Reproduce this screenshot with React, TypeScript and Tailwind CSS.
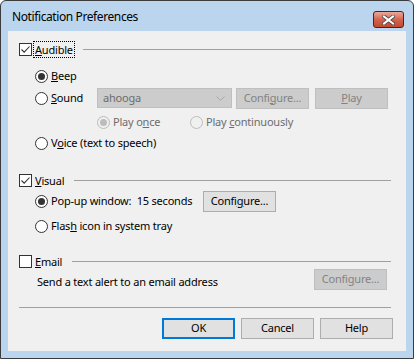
import type { ReactNode } from 'react'

const font = { fontFamily: '"Noto Sans", "Open Sans", sans-serif' }

function Check({ checked }: { checked?: boolean }) {
  return (
    <span className="w-[13px] h-[13px] shrink-0 border border-[#333333] bg-white flex items-center justify-center">
      {checked && (
        <svg width="11" height="11" viewBox="0 0 11 11">
          <path d="M1.5 5.5 L4.2 8.2 L9.5 2.5" fill="none" stroke="#333333" strokeWidth="1.1" />
        </svg>
      )}
    </span>
  )
}

function Radio({ checked, disabled }: { checked?: boolean; disabled?: boolean }) {
  return (
    <span
      className={`w-[13px] h-[13px] shrink-0 rounded-full border flex items-center justify-center ${
        disabled ? 'border-[#bcbcbc] bg-[#f0f0f0]' : 'border-[#333333] bg-white'
      }`}
    >
      {checked && (
        <span className={`w-[7px] h-[7px] rounded-full ${disabled ? 'bg-[#bcbcbc]' : 'bg-[#333333]'}`} />
      )}
    </span>
  )
}

function Btn({ children, disabled, primary }: { children: ReactNode; disabled?: boolean; primary?: boolean }) {
  let cls = 'border border-[#adadad] bg-[#e1e1e1] text-black'
  if (disabled) cls = 'border border-[#bfbfbf] bg-[#cccccc] text-[#838383]'
  if (primary) cls = 'border-2 border-[#0078d7] bg-[#e1e1e1] text-black'
  return (
    <div className={`w-[73px] h-[21px] shrink-0 flex items-center justify-center whitespace-nowrap ${cls}`}>
      {children}
    </div>
  )
}

function Group({ label, checked, focus }: { label: ReactNode; checked?: boolean; focus?: boolean }) {
  return (
    <div className="h-4 flex items-center pl-[11px] pr-[15px]">
      <Check checked={checked} />
      <span
        className={`ml-[1px] px-[1px] h-[17px] flex items-center leading-none ${
          focus ? 'border border-dotted border-black' : 'border border-transparent'
        }`}
      >
        {label}
      </span>
      <div className="flex-1 h-px bg-[#a0a0a0] ml-2" />
    </div>
  )
}

function Option({ children, checked, disabled }: { children: ReactNode; checked?: boolean; disabled?: boolean }) {
  return (
    <div className={`flex items-center gap-[3px] whitespace-nowrap ${disabled ? 'text-[#6d6d6d]' : 'text-black'}`}>
      <Radio checked={checked} disabled={disabled} />
      <span>{children}</span>
    </div>
  )
}

export default function App() {
  return (
    <div style={font} className="w-[414px] h-[359px] bg-[#bcd5ee] border border-[#3c3c3c] rounded-t-[6px] flex flex-col text-[11px] tracking-[-0.2px] text-black overflow-hidden">
      <div className="h-[30px] shrink-0 flex items-start justify-between pl-[11px] pr-[9px]">
        <span className="mt-[7px] text-[12px] tracking-[-0.4px] text-black">Notification Preferences</span>
        <div className="mt-[10px] w-[31px] h-[17px] rounded-[3px] border border-[#5a1c14] bg-gradient-to-b from-[#e9a99b] via-[#d4644e] to-[#c14a2e] flex items-center justify-center">
          <svg width="13" height="10" viewBox="0 0 13 10">
            <path d="M2 1.5 L11 8.5 M11 1.5 L2 8.5" stroke="#4a4a4a" strokeWidth="3.6" strokeLinecap="square" />
            <path d="M2 1.5 L11 8.5 M11 1.5 L2 8.5" stroke="#ffffff" strokeWidth="2" strokeLinecap="square" />
          </svg>
        </div>
      </div>

      <div className="mx-[7px] flex-1 bg-[#f0f0f0] flex flex-col pt-[10px]">
        <Group checked focus label={<><u>A</u>udible</>} />

        <div className="pl-[27px] mt-[11px] h-4 flex items-center">
          <Option checked><u>B</u>eep</Option>
        </div>

        <div className="pl-[27px] mt-[4px] h-5 flex items-center">
          <div className="w-[62px]">
            <Option><u>S</u>ound</Option>
          </div>
          <div className="w-[135px] h-5 border border-[#bfbfbf] bg-[#cccccc] flex items-center justify-between pl-[5px] pr-[6px] text-[#6d6d6d]">
            <span>ahooga</span>
            <svg width="9" height="5" viewBox="0 0 9 5">
              <path d="M0.5 0.5 L4.5 4.5 L8.5 0.5" fill="none" stroke="#a6a6a6" strokeWidth="1" />
            </svg>
          </div>
          <div className="ml-1">
            <Btn disabled>Confi<u>g</u>ure...</Btn>
          </div>
          <div className="ml-[6px]">
            <Btn disabled><u>P</u>lay</Btn>
          </div>
        </div>

        <div className="pl-[89px] mt-[6px] h-4 flex items-center">
          <div className="w-[93px]">
            <Option checked disabled>Play o<u>n</u>ce</Option>
          </div>
          <Option disabled>Play <u>c</u>ontinuously</Option>
        </div>

        <div className="pl-[27px] mt-[5px] h-4 flex items-center">
          <Option>V<u>o</u>ice (text to speech)</Option>
        </div>

        <div className="mt-[21px]">
          <Group checked label={<><u>V</u>isual</>} />
        </div>

        <div className="pl-[27px] mt-[3px] h-[21px] flex items-center">
          <div className="w-[168px]">
            <Option checked>Pop-up window:&nbsp; 15 seconds</Option>
          </div>
          <Btn>Confi<u>g</u>ure...</Btn>
        </div>

        <div className="pl-[27px] mt-[6px] h-4 flex items-center">
          <Option>Flas<u>h</u> icon in system tray</Option>
        </div>

        <div className="mt-[19px]">
          <Group label={<><u>E</u>mail</>} />
        </div>

        <div className="pl-[29px] pr-[19px] h-[21px] flex items-center justify-between">
          <span className="pt-[5px]">Send a text alert to an email address</span>
          <Btn disabled>Confi<u>g</u>ure...</Btn>
        </div>

        <div className="mx-[11px] mr-[15px] mt-[17px] h-px bg-[#a0a0a0]" />

        <div className="mt-[10px] pr-[13px] flex justify-end gap-[6px]">
          <Btn primary>OK</Btn>
          <Btn>Cancel</Btn>
          <Btn>Help</Btn>
        </div>
      </div>
      <div className="h-[7px] shrink-0" />
    </div>
  )
}
